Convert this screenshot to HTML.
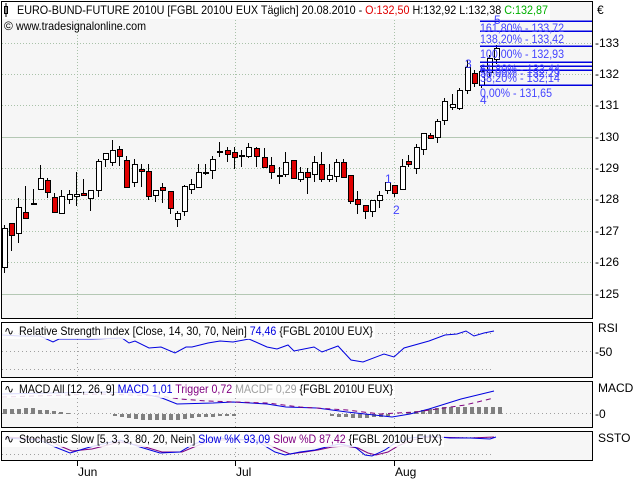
<!DOCTYPE html>
<html><head><meta charset="utf-8"><style>
html,body{margin:0;padding:0;background:#fff;width:640px;height:480px;overflow:hidden}
svg{display:block}
text{font-family:"Liberation Sans",sans-serif;font-size:12px}
</style></head><body>
<svg width="640" height="480" viewBox="0 0 640 480" xmlns="http://www.w3.org/2000/svg" shape-rendering="crispEdges">
<!-- main panel -->
<rect x="1.5" y="1.5" width="591" height="317" fill="#f6f6f6" stroke="#000"/>
<g stroke="#a9c2a9" stroke-dasharray="1 2">
<line x1="2" x2="592" y1="43.5" y2="43.5"/><line x1="2" x2="592" y1="74.5" y2="74.5"/><line x1="2" x2="592" y1="105.5" y2="105.5"/>
<line x1="2" x2="592" y1="168.5" y2="168.5"/><line x1="2" x2="592" y1="199.5" y2="199.5"/><line x1="2" x2="592" y1="231.5" y2="231.5"/><line x1="2" x2="592" y1="262.5" y2="262.5"/>
<line x1="77.5" x2="77.5" y1="2" y2="318"/><line x1="235.5" x2="235.5" y1="2" y2="318"/><line x1="394.5" x2="394.5" y1="2" y2="318"/>
</g>
<g stroke="#b4c8b4"><line x1="2" x2="592" y1="137.5" y2="137.5"/><line x1="2" x2="592" y1="294.5" y2="294.5"/></g>
<!-- header -->
<rect x="2" y="2" width="548" height="17" fill="#fff"/>
<rect x="4.5" y="6.5" width="3" height="7" fill="#fff" stroke="#000"/><line x1="6" x2="6" y1="3" y2="17" stroke="#000"/>
<text x="17" y="14" textLength="531" lengthAdjust="spacingAndGlyphs">EURO-BUND-FUTURE 2010U [FGBL 2010U EUX  Täglich] 20.08.2010 - <tspan fill="#e00000">O:132,50</tspan> H:132,92 L:132,38 <tspan fill="#00b000">C:132,87</tspan></text>
<text x="4" y="30" font-size="9">©</text>
<text x="16" y="30" textLength="130" lengthAdjust="spacingAndGlyphs">www.tradesignalonline.com</text>
<!-- candles -->
<g stroke="#000" stroke-width="1">
<line x1="4.5" x2="4.5" y1="225" y2="273"/><rect x="2.5" y="228.5" width="5" height="39" fill="#fff"/>
<line x1="11.5" x2="11.5" y1="223" y2="251"/><rect x="9.5" y="223.5" width="5" height="12" fill="#e00000"/>
<line x1="18.5" x2="18.5" y1="198" y2="243"/><rect x="16.5" y="207.5" width="5" height="26" fill="#fff"/>
<line x1="25.5" x2="25.5" y1="186" y2="218"/><rect x="23.5" y="212.5" width="5" height="6" fill="#e00000"/>
<line x1="33.5" x2="33.5" y1="189" y2="205"/><rect x="31.5" y="203.5" width="5" height="1" fill="#000"/>
<line x1="40.5" x2="40.5" y1="165" y2="189"/><rect x="38.5" y="178.5" width="5" height="11" fill="#fff"/>
<line x1="47.5" x2="47.5" y1="178" y2="198"/><rect x="45.5" y="180.5" width="5" height="12" fill="#e00000"/>
<line x1="54.5" x2="54.5" y1="193" y2="213"/><rect x="52.5" y="197.5" width="5" height="15" fill="#e00000"/>
<line x1="61.5" x2="61.5" y1="190" y2="213"/><rect x="59.5" y="196.5" width="5" height="17" fill="#fff"/>
<line x1="69.5" x2="69.5" y1="190" y2="204"/><rect x="67.5" y="194.5" width="5" height="5" fill="#fff"/>
<line x1="76.5" x2="76.5" y1="172" y2="206"/><rect x="74.5" y="194.5" width="5" height="2" fill="#fff"/>
<line x1="83.5" x2="83.5" y1="179" y2="196"/><rect x="81.5" y="193.5" width="5" height="2" fill="#e00000"/>
<line x1="90.5" x2="90.5" y1="190" y2="211"/><rect x="88.5" y="190.5" width="5" height="8" fill="#fff"/>
<line x1="98.5" x2="98.5" y1="159" y2="197"/><rect x="96.5" y="161.5" width="5" height="29" fill="#fff"/>
<line x1="105.5" x2="105.5" y1="153" y2="167"/><rect x="103.5" y="153.5" width="5" height="6" fill="#fff"/>
<line x1="112.5" x2="112.5" y1="140" y2="166"/><rect x="110.5" y="150.5" width="5" height="12" fill="#fff"/>
<line x1="119.5" x2="119.5" y1="146" y2="166"/><rect x="117.5" y="149.5" width="5" height="7" fill="#e00000"/>
<line x1="126.5" x2="126.5" y1="156" y2="187"/><rect x="124.5" y="160.5" width="5" height="27" fill="#e00000"/>
<line x1="134.5" x2="134.5" y1="159" y2="187"/><rect x="132.5" y="164.5" width="5" height="18" fill="#fff"/>
<line x1="141.5" x2="141.5" y1="164" y2="187"/><rect x="139.5" y="169.5" width="5" height="2" fill="#e00000"/>
<line x1="148.5" x2="148.5" y1="164" y2="200"/><rect x="146.5" y="171.5" width="5" height="25" fill="#e00000"/>
<line x1="155.5" x2="155.5" y1="190" y2="202"/><rect x="153.5" y="190.5" width="5" height="5" fill="#fff"/>
<line x1="162.5" x2="162.5" y1="183" y2="203"/><rect x="160.5" y="187.5" width="5" height="3" fill="#e00000"/>
<line x1="170.5" x2="170.5" y1="191" y2="214"/><rect x="168.5" y="191.5" width="5" height="17" fill="#e00000"/>
<line x1="177.5" x2="177.5" y1="211" y2="227"/><rect x="175.5" y="213.5" width="5" height="6" fill="#fff"/>
<line x1="184.5" x2="184.5" y1="185" y2="216"/><rect x="182.5" y="186.5" width="5" height="25" fill="#fff"/>
<line x1="191.5" x2="191.5" y1="179" y2="194"/><rect x="189.5" y="184.5" width="5" height="5" fill="#fff"/>
<line x1="198.5" x2="198.5" y1="164" y2="187"/><rect x="196.5" y="172.5" width="5" height="15" fill="#fff"/>
<line x1="205.5" x2="205.5" y1="164" y2="175"/><rect x="203.5" y="172.5" width="5" height="1" fill="#000"/>
<line x1="212.5" x2="212.5" y1="156" y2="179"/><rect x="210.5" y="159.5" width="5" height="11" fill="#fff"/>
<line x1="219.5" x2="219.5" y1="142" y2="157"/><rect x="217.5" y="151.5" width="5" height="1" fill="#000"/>
<line x1="227.5" x2="227.5" y1="147" y2="162"/><rect x="225.5" y="150.5" width="5" height="4" fill="#e00000"/>
<line x1="234.5" x2="234.5" y1="147" y2="169"/><rect x="232.5" y="152.5" width="5" height="5" fill="#e00000"/>
<line x1="241.5" x2="241.5" y1="150" y2="167"/><rect x="239.5" y="155.5" width="5" height="1" fill="#000"/>
<line x1="248.5" x2="248.5" y1="143" y2="158"/><rect x="246.5" y="147.5" width="5" height="9" fill="#fff"/>
<line x1="256.5" x2="256.5" y1="147" y2="167"/><rect x="254.5" y="148.5" width="5" height="8" fill="#e00000"/>
<line x1="264.5" x2="264.5" y1="148" y2="167"/><rect x="262.5" y="157.5" width="5" height="10" fill="#e00000"/>
<line x1="271.5" x2="271.5" y1="157" y2="179"/><rect x="269.5" y="165.5" width="5" height="7" fill="#e00000"/>
<line x1="279.5" x2="279.5" y1="167" y2="184"/><rect x="277.5" y="175.5" width="5" height="1" fill="#000"/>
<line x1="285.5" x2="285.5" y1="152" y2="177"/><rect x="283.5" y="162.5" width="5" height="12" fill="#fff"/>
<line x1="293.5" x2="293.5" y1="160" y2="179"/><rect x="291.5" y="160.5" width="5" height="18" fill="#e00000"/>
<line x1="300.5" x2="300.5" y1="167" y2="182"/><rect x="298.5" y="172.5" width="5" height="7" fill="#fff"/>
<line x1="307.5" x2="307.5" y1="168" y2="194"/><rect x="305.5" y="172.5" width="5" height="5" fill="#e00000"/>
<line x1="314.5" x2="314.5" y1="156" y2="182"/><rect x="312.5" y="162.5" width="5" height="12" fill="#fff"/>
<line x1="321.5" x2="321.5" y1="152" y2="182"/><rect x="319.5" y="164.5" width="5" height="15" fill="#e00000"/>
<line x1="329.5" x2="329.5" y1="164" y2="182"/><rect x="327.5" y="175.5" width="5" height="4" fill="#fff"/>
<line x1="336.5" x2="336.5" y1="159" y2="182"/><rect x="334.5" y="162.5" width="5" height="14" fill="#fff"/>
<line x1="343.5" x2="343.5" y1="159" y2="178"/><rect x="341.5" y="162.5" width="5" height="15" fill="#e00000"/>
<line x1="350.5" x2="350.5" y1="175" y2="204"/><rect x="348.5" y="175.5" width="5" height="26" fill="#e00000"/>
<line x1="357.5" x2="357.5" y1="191" y2="214"/><rect x="355.5" y="199.5" width="5" height="5" fill="#e00000"/>
<line x1="365.5" x2="365.5" y1="205" y2="219"/><rect x="363.5" y="205.5" width="5" height="6" fill="#e00000"/>
<line x1="372.5" x2="372.5" y1="200" y2="217"/><rect x="370.5" y="200.5" width="5" height="11" fill="#fff"/>
<line x1="379.5" x2="379.5" y1="191" y2="208"/><rect x="377.5" y="195.5" width="5" height="5" fill="#fff"/>
<line x1="387.5" x2="387.5" y1="182" y2="194"/><rect x="385.5" y="182.5" width="5" height="8" fill="#fff"/>
<line x1="394.5" x2="394.5" y1="185" y2="197"/><rect x="392.5" y="185.5" width="5" height="8" fill="#e00000"/>
<line x1="402.5" x2="402.5" y1="159" y2="189"/><rect x="400.5" y="166.5" width="5" height="23" fill="#fff"/>
<line x1="408.5" x2="408.5" y1="155" y2="167"/><rect x="406.5" y="161.5" width="5" height="3" fill="#e00000"/>
<line x1="416.5" x2="416.5" y1="144" y2="174"/><rect x="414.5" y="147.5" width="5" height="21" fill="#fff"/>
<line x1="423.5" x2="423.5" y1="133" y2="155"/><rect x="421.5" y="133.5" width="5" height="16" fill="#fff"/>
<line x1="430.5" x2="430.5" y1="133" y2="138"/><rect x="428.5" y="135.5" width="5" height="3" fill="#e00000"/>
<line x1="437.5" x2="437.5" y1="119" y2="143"/><rect x="435.5" y="121.5" width="5" height="16" fill="#fff"/>
<line x1="444.5" x2="444.5" y1="98" y2="125"/><rect x="442.5" y="101.5" width="5" height="19" fill="#fff"/>
<line x1="452.5" x2="452.5" y1="94" y2="110"/><rect x="450.5" y="104.5" width="5" height="3" fill="#fff"/>
<line x1="459.5" x2="459.5" y1="88" y2="110"/><rect x="457.5" y="90.5" width="5" height="18" fill="#fff"/>
<line x1="467.5" x2="467.5" y1="60" y2="94"/><rect x="465.5" y="67.5" width="5" height="23" fill="#fff"/>
<line x1="474.5" x2="474.5" y1="70" y2="87"/><rect x="472.5" y="73.5" width="5" height="10" fill="#e00000"/>
<line x1="481.5" x2="481.5" y1="65" y2="88"/><rect x="479.5" y="71.5" width="5" height="14" fill="#fff"/>
<line x1="489.5" x2="489.5" y1="55" y2="77"/><rect x="487.5" y="58.5" width="5" height="14" fill="#fff"/>
<line x1="496.5" x2="496.5" y1="45" y2="64"/><rect x="494.5" y="48.5" width="5" height="11" fill="#fff"/>
</g>
<!-- fib -->
<g stroke="#0000e0" stroke-width="1.5">
<line x1="480" x2="592" y1="21" y2="21"/><line x1="480" x2="592" y1="31" y2="31"/><line x1="480" x2="592" y1="46" y2="46"/>
<line x1="480" x2="592" y1="62" y2="62"/><line x1="480" x2="592" y1="66" y2="66"/><line x1="480" x2="592" y1="70" y2="70"/><line x1="480" x2="592" y1="85" y2="85"/>
</g>
<g fill="#4444ff">
<text x="494" y="24">5</text>
<text x="480" y="32" textLength="84" lengthAdjust="spacingAndGlyphs">161,80% - 133,72</text>
<text x="480" y="43" textLength="84" lengthAdjust="spacingAndGlyphs">138,20% - 133,42</text>
<text x="480" y="58" textLength="84" lengthAdjust="spacingAndGlyphs">100,00% - 132,93</text>
<text x="480" y="73" textLength="80" lengthAdjust="spacingAndGlyphs">61,80% - 132,44</text>
<text x="480" y="77" textLength="80" lengthAdjust="spacingAndGlyphs">50,00% - 132,29</text>
<text x="480" y="82" textLength="80" lengthAdjust="spacingAndGlyphs">38,20% - 132,14</text>
<text x="480" y="97" textLength="72" lengthAdjust="spacingAndGlyphs">0,00% - 131,65</text>
<text x="480" y="104">4</text>
<text x="465" y="68">3</text>
<text x="385" y="183">1</text>
<text x="393" y="214">2</text>
</g>
<!-- right axis -->
<g fill="#000">
<text x="597" y="14">€</text>
<text x="595" y="47">-133</text><text x="595" y="78">-132</text><text x="595" y="109">-131</text><text x="595" y="141">-130</text>
<text x="595" y="172">-129</text><text x="595" y="203">-128</text><text x="595" y="235">-127</text><text x="595" y="266">-126</text><text x="595" y="298">-125</text>
<text x="598" y="332">RSI</text><text x="595" y="356">-50</text>
<text x="598" y="392">MACD</text><text x="595" y="418">-0</text>
<text x="598" y="442">SSTO</text>
</g>
<!-- RSI panel -->
<rect x="1.5" y="322.5" width="591" height="55" fill="#f6f6f6" stroke="#000"/>
<g stroke="#a0a0a0" stroke-dasharray="1 3"><line x1="2" x2="494" y1="333.5" y2="333.5"/><line x1="2" x2="592" y1="351.5" y2="351.5"/><line x1="2" x2="494" y1="369.5" y2="369.5"/><line x1="77.5" x2="77.5" y1="323" y2="377"/><line x1="235.5" x2="235.5" y1="323" y2="377"/><line x1="394.5" x2="394.5" y1="323" y2="377"/></g>
<polyline shape-rendering="auto" fill="none" stroke="#0000e0" points="2,335 20,336 40,336 53,342 59,339 92,339 122,338 129,343 135,341 149,348 161,347 175,353 186,347 192,347 208,343 220,341 233,342 249,339 267,347 277,349 288,345 294,351 304,349 314,347 322,352 338,346 351,360 363,362 384,354 394,357 404,348 429,341 445,335 457,334 466,331 474,336 484,333 494,331"/>
<rect x="2" y="323" width="373" height="16" fill="#fff" opacity="0.85"/>
<text x="4" y="335" font-size="11">∿</text>
<text x="19" y="335" textLength="354" lengthAdjust="spacingAndGlyphs">Relative Strength Index [Close, 14, 30, 70, Nein] <tspan fill="#0000e0">74,46</tspan> {FGBL 2010U EUX}</text>
<!-- MACD panel -->
<rect x="1.5" y="381.5" width="591" height="46" fill="#f6f6f6" stroke="#000"/>
<g stroke="#a0a0a0" stroke-dasharray="1 3"><line x1="2" x2="592" y1="413.5" y2="413.5"/><line x1="77.5" x2="77.5" y1="382" y2="427"/><line x1="235.5" x2="235.5" y1="382" y2="427"/><line x1="394.5" x2="394.5" y1="382" y2="427"/></g>
<g fill="#808080">
<rect x="3" y="409" width="4" height="5"/><rect x="10" y="409" width="4" height="5"/><rect x="17" y="409" width="4" height="5"/><rect x="24" y="408" width="4" height="6"/><rect x="31" y="408" width="4" height="6"/><rect x="38" y="410" width="4" height="4"/><rect x="45" y="410" width="4" height="4"/><rect x="52" y="411" width="4" height="3"/><rect x="59" y="412" width="4" height="2"/><rect x="66" y="413" width="4" height="1"/>
<rect x="113" y="414" width="4" height="2"/><rect x="120" y="414" width="4" height="3"/><rect x="127" y="414" width="4" height="4"/><rect x="134" y="414" width="4" height="5"/><rect x="141" y="414" width="4" height="6"/><rect x="148" y="414" width="4" height="6"/><rect x="155" y="414" width="4" height="6"/><rect x="162" y="414" width="4" height="6"/><rect x="169" y="414" width="4" height="6"/><rect x="176" y="414" width="4" height="6"/><rect x="183" y="414" width="4" height="5"/><rect x="190" y="414" width="4" height="4"/><rect x="197" y="414" width="4" height="3"/><rect x="204" y="414" width="4" height="3"/><rect x="211" y="414" width="4" height="3"/><rect x="218" y="414" width="4" height="2"/><rect x="225" y="414" width="4" height="2"/><rect x="232" y="414" width="4" height="2"/>
<rect x="330" y="414" width="4" height="2"/><rect x="337" y="414" width="4" height="3"/><rect x="344" y="414" width="4" height="3"/><rect x="351" y="414" width="4" height="4"/><rect x="358" y="414" width="4" height="4"/><rect x="365" y="414" width="4" height="4"/><rect x="372" y="414" width="4" height="3"/><rect x="379" y="414" width="4" height="3"/><rect x="386" y="414" width="4" height="2"/>
<rect x="407" y="412" width="4" height="2"/><rect x="414" y="411" width="4" height="3"/><rect x="421" y="410" width="4" height="4"/><rect x="428" y="409" width="4" height="5"/><rect x="435" y="408" width="4" height="6"/><rect x="442" y="407" width="4" height="7"/><rect x="449" y="407" width="4" height="7"/><rect x="456" y="407" width="4" height="7"/><rect x="463" y="407" width="4" height="7"/><rect x="470" y="407" width="4" height="7"/><rect x="477" y="407" width="4" height="7"/><rect x="484" y="407" width="4" height="7"/><rect x="491" y="407" width="4" height="7"/><rect x="498" y="407" width="4" height="7"/>
</g>
<polyline shape-rendering="auto" fill="none" stroke="#0000e0" points="2,394 100,392 140,393 162,398 177,404 213,403 233,402 267,404 286,407 317,408 347,412 392,417 410,414 429,409 461,399 494,391"/>
<polyline shape-rendering="auto" fill="none" stroke="#800080" stroke-dasharray="5 4" points="2,397 100,394 160,396 180,399 207,401 267,403 300,407 347,410 380,414 416,412 465,405 494,398"/>
<rect x="2" y="382" width="393" height="16" fill="#fff" opacity="0.85"/>
<text x="4" y="393" font-size="11">∿</text>
<text x="19" y="393" textLength="374" lengthAdjust="spacingAndGlyphs">MACD All [12, 26, 9] <tspan fill="#0000e0">MACD 1,01</tspan><tspan fill="#800080"> Trigger 0,72</tspan><tspan fill="#a0a0a0"> MACDF 0,29</tspan> {FGBL 2010U EUX}</text>
<!-- Stoch panel -->
<rect x="1.5" y="431.5" width="591" height="29" fill="#f6f6f6" stroke="#000"/>
<g stroke="#a0a0a0" stroke-dasharray="1 3"><line x1="2" x2="494" y1="437.5" y2="437.5"/><line x1="2" x2="494" y1="454.5" y2="454.5"/><line x1="77.5" x2="77.5" y1="432" y2="460"/><line x1="235.5" x2="235.5" y1="432" y2="460"/><line x1="394.5" x2="394.5" y1="432" y2="460"/></g>
<polyline shape-rendering="auto" fill="none" stroke="#800080" points="5,437 45,439 60,446 72,451 92,449 120,442 142,446 162,452 182,452 194,447 212,440 258,440 278,449 290,454 305,452 318,450 332,447 345,446 358,448 368,453 376,455 388,452 398,446 412,440 430,437 470,438 494,437"/>
<polyline shape-rendering="auto" fill="none" stroke="#0000e0" points="5,438 40,440 55,447 70,453 90,447 120,440 140,447 160,453 180,452 192,445 210,438 255,440 275,452 285,455 300,452 315,450 330,446 340,444 355,447 365,455 372,456 385,450 395,443 410,438 430,436 450,438 470,438 490,439 496,437"/>
<rect x="2" y="432" width="442" height="15" fill="#fff" opacity="0.85"/>
<text x="4" y="443" font-size="11">∿</text>
<text x="19" y="443" textLength="423" lengthAdjust="spacingAndGlyphs">Stochastic Slow [5, 3, 3, 80, 20, Nein] <tspan fill="#0000e0">Slow %K 93,09</tspan><tspan fill="#800080"> Slow %D 87,42</tspan> {FGBL 2010U EUX}</text>
<!-- x axis -->
<g stroke="#000"><line x1="77.5" x2="77.5" y1="461" y2="466"/><line x1="235.5" x2="235.5" y1="461" y2="466"/><line x1="394.5" x2="394.5" y1="461" y2="466"/></g>
<text x="78" y="476">Jun</text><text x="236" y="476">Jul</text><text x="395" y="476">Aug</text>
</svg>
</body></html>
